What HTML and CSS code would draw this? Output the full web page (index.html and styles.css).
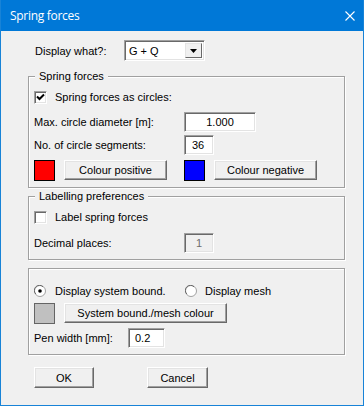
FILE: index.html
```html
<!DOCTYPE html>
<html>
<head>
    <title>Spring forces</title>
    <link rel="stylesheet" href="styles.css">
</head>
<body>
    <div class="window">
        <div class="titlebar">
            <span class="title">Spring forces</span>
            <svg class="close" width="10" height="10" viewBox="0 0 10 10">
                <path d="M0.5 0.5 L9.5 9.5 M9.5 0.5 L0.5 9.5" stroke="#fff" stroke-width="1.1" fill="none"/>
            </svg>
        </div>

        <div class="content">
            <div class="display-row">
                <span class="display-label">Display what?:</span>
                <div class="combo">
                    <span class="combo-text">G + Q</span>
                    <span class="combo-btn">
                        <svg width="7" height="4" viewBox="0 0 7 4"><path d="M0 0 H7 L3.5 4 Z" fill="#000"/></svg>
                    </span>
                </div>
            </div>

            <!-- Spring forces -->
            <div class="group">
                <span class="legend">Spring forces</span>
                <div class="row check-row">
                    <span class="checkbox">
                        <svg width="9" height="9" viewBox="0 0 9 9"><path d="M1 3.5 L3.5 6 L8 1.5" stroke="#000" stroke-width="2" fill="none"/></svg>
                    </span>
                    <span>Spring forces as circles:</span>
                </div>
                <div class="row field-row">
                    <span class="label">Max. circle diameter [m]:</span>
                    <span class="textbox tb-diameter">1.000</span>
                </div>
                <div class="row field-row tight">
                    <span class="label">No. of circle segments:</span>
                    <span class="textbox tb-segments">36</span>
                </div>
                <div class="row colour-row">
                    <div class="colour-cell">
                        <span class="swatch red"></span>
                        <span class="button btn-colour">Colour positive</span>
                    </div>
                    <div class="colour-cell">
                        <span class="swatch blue"></span>
                        <span class="button btn-colour">Colour negative</span>
                    </div>
                </div>
            </div>

            <!-- Labelling preferences -->
            <div class="group">
                <span class="legend">Labelling preferences</span>
                <div class="row check-row">
                    <span class="checkbox"></span>
                    <span>Label spring forces</span>
                </div>
                <div class="row field-row decimal-row">
                    <span class="label">Decimal places:</span>
                    <span class="textbox tb-decimal disabled">1</span>
                </div>
            </div>

            <!-- System boundary -->
            <div class="group group-system">
                <div class="row radio-row">
                    <div class="radio-cell">
                        <svg class="radio" width="12" height="12" viewBox="0 0 12 12">
                            <circle cx="6" cy="6" r="5.5" fill="#fff" stroke="#a0a0a0"/>
                            <path d="M1.8 9 A4.5 4.5 0 0 1 9 1.8" stroke="#696969" fill="none"/>
                            <circle cx="6" cy="6" r="1.8" fill="#000"/>
                        </svg>
                        <span>Display system bound.</span>
                    </div>
                    <div class="radio-cell second">
                        <svg class="radio" width="12" height="12" viewBox="0 0 12 12">
                            <circle cx="6" cy="6" r="5.5" fill="#fff" stroke="#a0a0a0"/>
                            <path d="M1.8 9 A4.5 4.5 0 0 1 9 1.8" stroke="#696969" fill="none"/>
                        </svg>
                        <span>Display mesh</span>
                    </div>
                </div>
                <div class="row mesh-row">
                    <span class="swatch grey"></span>
                    <span class="button btn-mesh">System bound./mesh colour</span>
                </div>
                <div class="row pen-row">
                    <span class="pen-label">Pen width [mm]:</span>
                    <span class="textbox tb-pen">0.2</span>
                </div>
            </div>

            <div class="button-row">
                <span class="button btn-ok">OK</span>
                <span class="button btn-cancel">Cancel</span>
            </div>
        </div>
    </div>
</body>
</html>
```

FILE: styles.css
```css
body {
    margin: 0;
    font-family: "Liberation Sans", Arial, sans-serif;
    font-size: 11px;
    color: #000;
}
.window {
    width: 364px;
    height: 406px;
    box-sizing: border-box;
    border: 1px solid #1883d7;
    border-top: none;
    background: #f0f0f0;
}
.titlebar {
    height: 31px;
    background: #0078d7;
    color: #fff;
    display: flex;
    align-items: center;
    justify-content: space-between;
    padding: 0 8px 0 9px;
}
.title {
    font-family: "Open Sans", "Noto Sans", sans-serif;
    font-size: 12px;
    letter-spacing: -0.3px;
}
.content {
    padding-left: 27px;
    width: 317px;
}
.display-row {
    display: flex;
    align-items: center;
    height: 21px;
    margin-top: 9px;
    padding-left: 7px;
}
.display-label {
    width: 89px;
}
.combo {
    width: 81px;
    height: 21px;
    box-sizing: border-box;
    background: #fff;
    border: 1px solid;
    border-color: #a0a0a0 #fff #fff #a0a0a0;
    box-shadow: inset 1px 1px 0 #696969, inset -1px -1px 0 #e3e3e3;
    display: flex;
    align-items: center;
    justify-content: space-between;
    padding: 2px;
}
.combo-text {
    padding-left: 2px;
}
.combo-btn {
    width: 17px;
    height: 15px;
    box-sizing: border-box;
    background: #f0f0f0;
    border: 1px solid;
    border-color: #e3e3e3 #696969 #696969 #e3e3e3;
    display: flex;
    align-items: center;
    justify-content: center;
}
.group {
    position: relative;
    margin-top: 15px;
    height: 112px;
    box-sizing: border-box;
    border: 1px solid #a0a0a0;
    box-shadow: inset 1px 1px 0 #fff, 1px 1px 0 #fff;
    padding: 12px 0 0 5px;
}
.group + .group {
    margin-top: 8px;
    height: 64px;
}
.group.group-system {
    height: 87px;
    padding-top: 14px;
}
.legend {
    position: absolute;
    top: -7px;
    left: 6px;
    padding: 0 4px;
    background: #f0f0f0;
}
.row {
    display: flex;
    align-items: center;
}
.check-row {
    height: 16px;
    gap: 8px;
}
.checkbox {
    width: 13px;
    height: 13px;
    box-sizing: border-box;
    background: #fff;
    border: 1px solid;
    border-color: #a0a0a0 #fff #fff #a0a0a0;
    box-shadow: inset 1px 1px 0 #696969, inset -1px -1px 0 #e3e3e3;
    display: flex;
    align-items: center;
    justify-content: center;
}
.field-row {
    height: 20px;
    margin-top: 7px;
}
.field-row.tight {
    margin-top: 3px;
}
.field-row.decimal-row {
    margin-top: 8px;
}
.label {
    width: 150px;
}
.textbox {
    height: 20px;
    box-sizing: border-box;
    background: #fff;
    border: 1px solid;
    border-color: #a0a0a0 #fff #fff #a0a0a0;
    box-shadow: inset 1px 1px 0 #696969, inset -1px -1px 0 #e3e3e3;
    display: flex;
    align-items: center;
}
.tb-diameter {
    width: 72px;
    justify-content: center;
}
.tb-segments {
    width: 30px;
    padding-left: 7px;
}
.tb-decimal {
    width: 30px;
    justify-content: center;
}
.tb-pen {
    width: 37px;
    padding-left: 6px;
}
.textbox.disabled {
    background: #f0f0f0;
    color: #6d6d6d;
}
.colour-row {
    margin-top: 5px;
    height: 21px;
}
.colour-cell {
    width: 150px;
    display: flex;
    align-items: center;
    gap: 9px;
}
.swatch {
    width: 21px;
    height: 21px;
    box-sizing: border-box;
    border: 1px solid #000;
}
.swatch.red { background: #ff0000; }
.swatch.blue { background: #0000ff; }
.swatch.grey { background: #c0c0c0; border-color: #646464; }
.button {
    height: 20px;
    box-sizing: border-box;
    background: #f0f0f0;
    border: 1px solid;
    border-color: #fff #696969 #696969 #fff;
    box-shadow: inset -1px -1px 0 #a0a0a0, inset 1px 1px 0 #e3e3e3;
    display: flex;
    align-items: center;
    justify-content: center;
}
.btn-colour {
    width: 103px;
    margin-top: -1px;
}
.radio-row {
    height: 16px;
}
.radio-cell {
    width: 150px;
    display: flex;
    align-items: center;
    gap: 9px;
}
.radio-cell.second {
    padding-left: 1px;
    gap: 8px;
}
.mesh-row {
    margin-top: 4px;
    height: 21px;
    gap: 9px;
}
.btn-mesh {
    width: 163px;
    margin-top: -1px;
}
.pen-row {
    margin-top: 4px;
    height: 20px;
}
.pen-label {
    width: 94px;
}
.button-row {
    display: flex;
    gap: 53px;
    margin-top: 12px;
    padding-left: 6px;
}
.btn-ok {
    width: 60px;
    height: 21px;
}
.btn-cancel {
    width: 61px;
    height: 21px;
}
```
